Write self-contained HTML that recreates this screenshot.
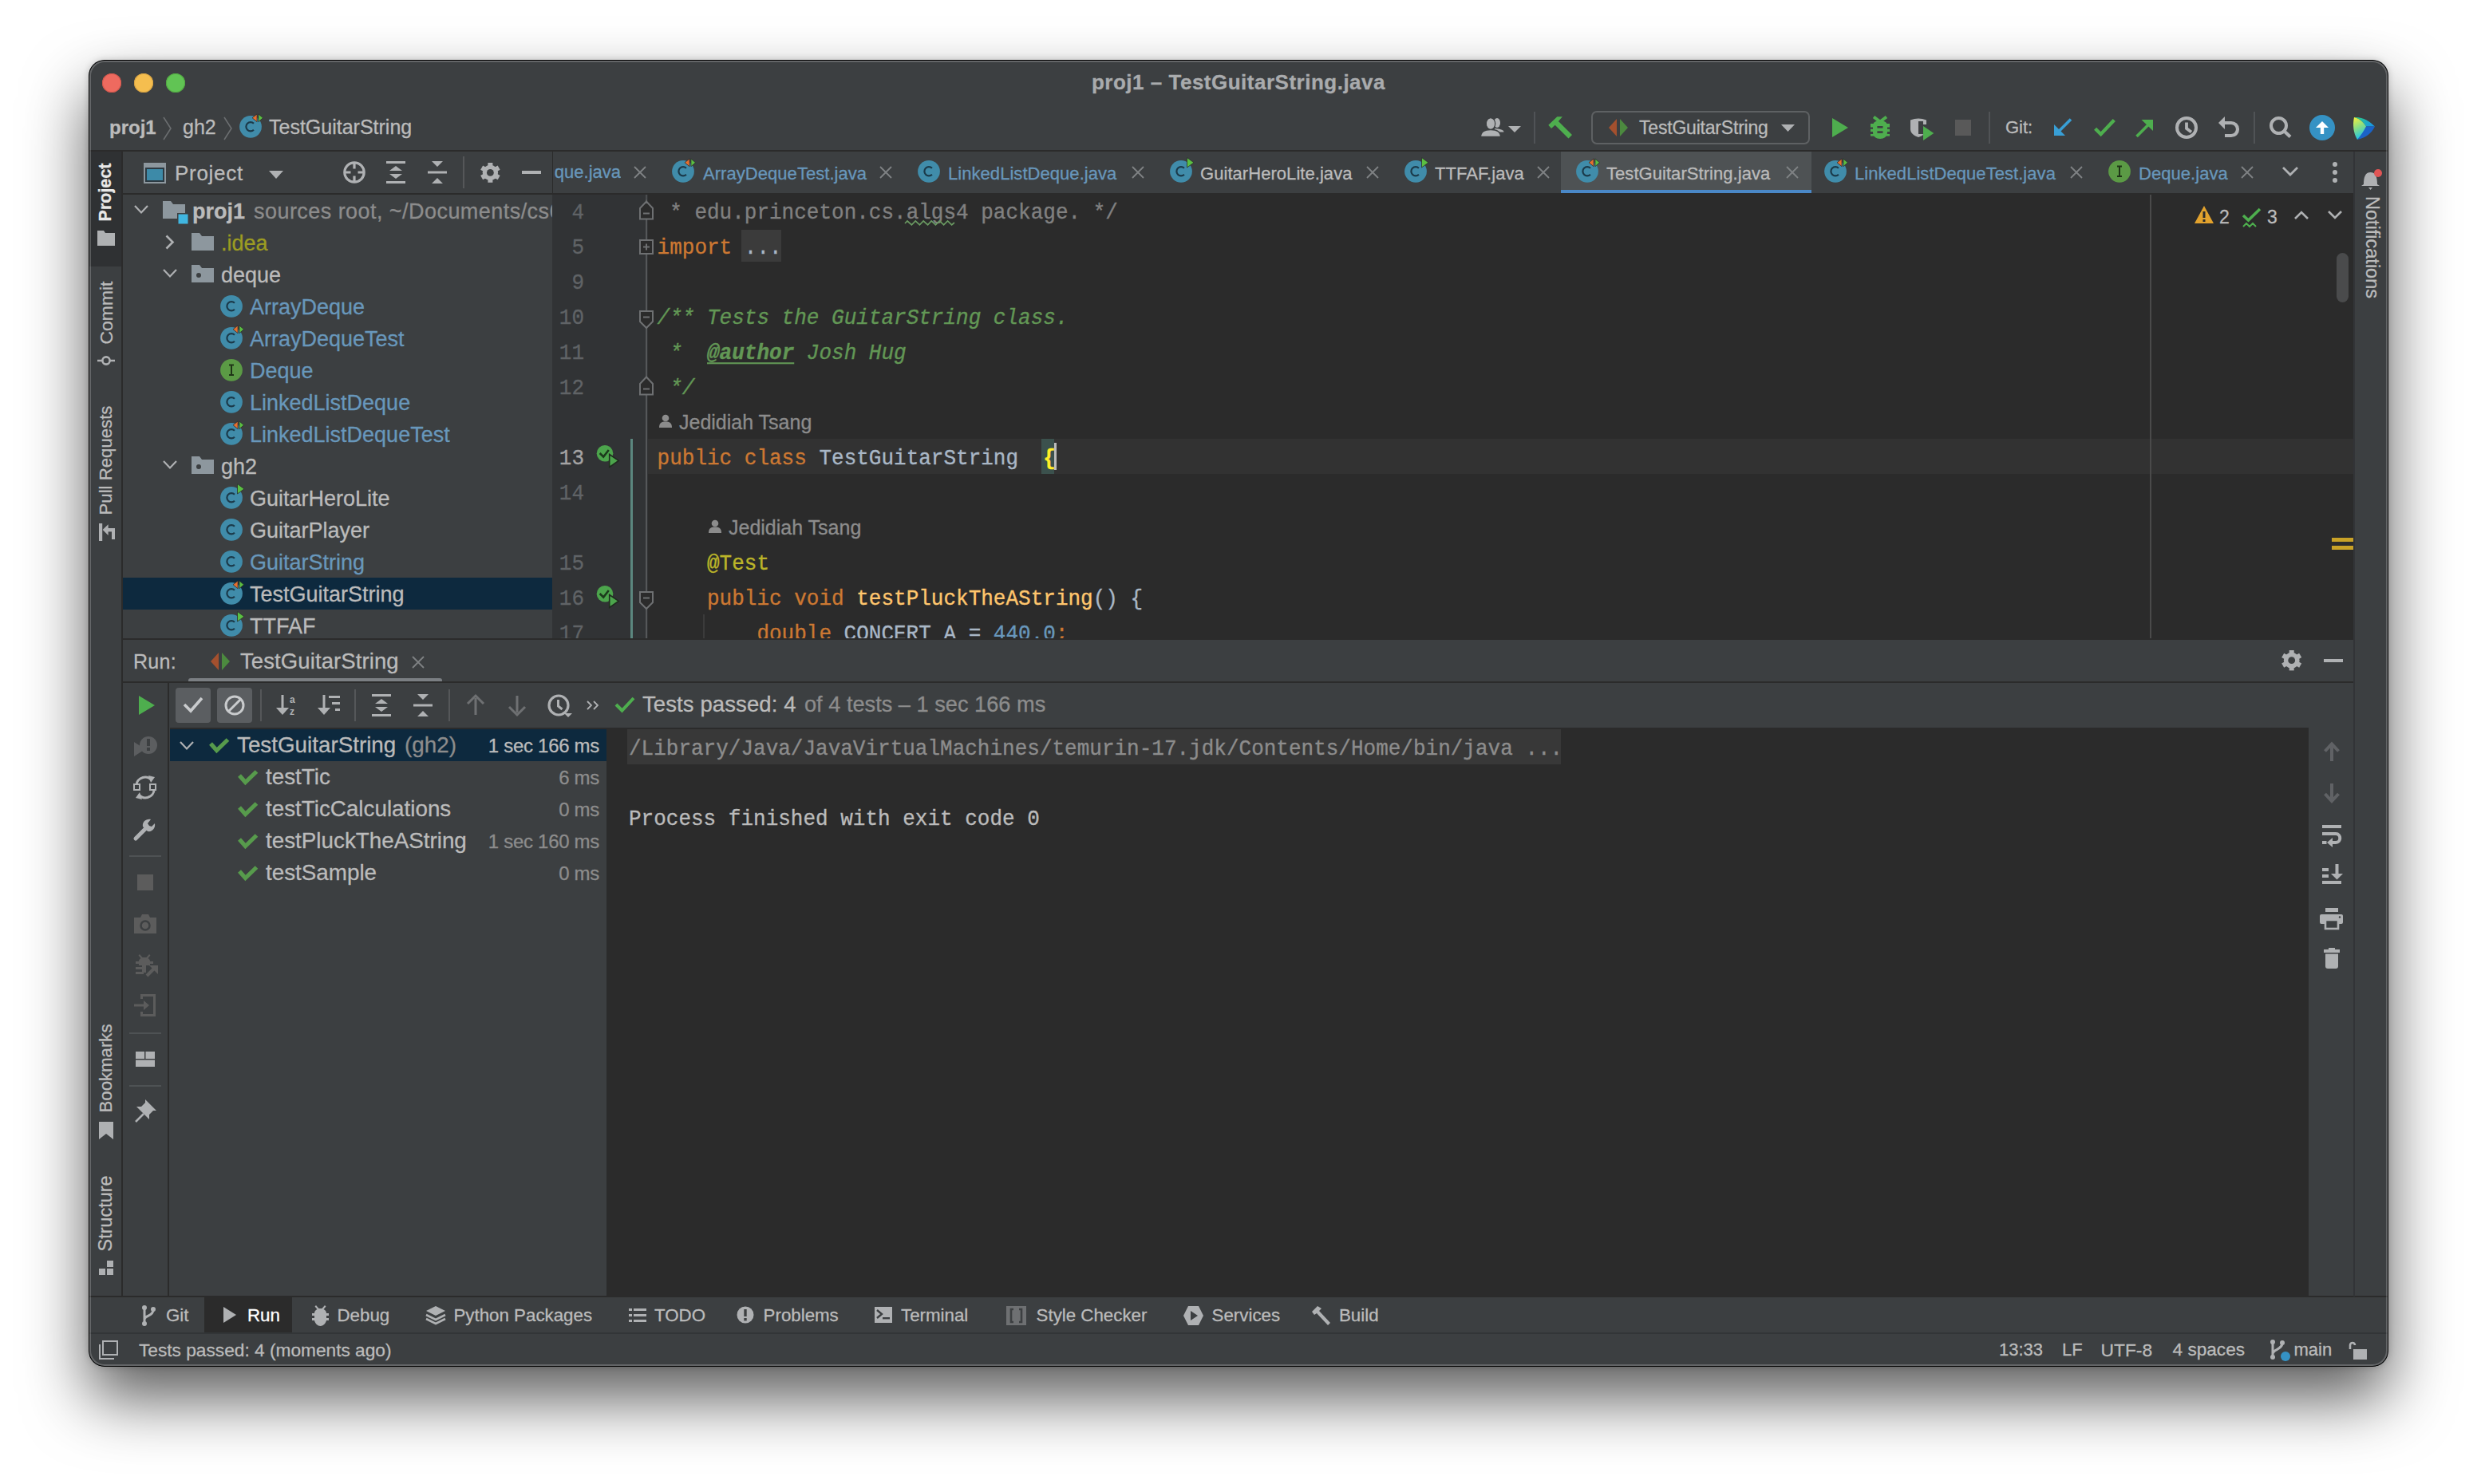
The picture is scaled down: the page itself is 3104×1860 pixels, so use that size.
<!DOCTYPE html><html><head><meta charset="utf-8"><style>html,body{margin:0;padding:0;background:#fff;width:3104px;height:1860px;overflow:hidden;position:relative}div{-webkit-text-stroke:0.3px currentColor}</style></head><body>
<div style="position:absolute;left:111px;top:75px;width:2882px;height:1638px;border-radius:20px;box-shadow:0 40px 80px 0 rgba(0,0,0,0.64), 0 0 8px rgba(0,0,0,0.18);"></div>
<div style="position:absolute;left:111px;top:75px;width:2882px;height:1638px;border-radius:20px;overflow:hidden;background:#3c3f41;">
<div style="position:absolute;left:-111px;top:-75px;width:3104px;height:1860px;">
<div style="position:absolute;left:128px;top:92px;width:24px;height:24px;border-radius:50%;background:#ee6a5f;box-shadow:inset 0 0 0 1px #d2574d"></div>
<div style="position:absolute;left:168px;top:92px;width:24px;height:24px;border-radius:50%;background:#f5be4f;box-shadow:inset 0 0 0 1px #d6a243"></div>
<div style="position:absolute;left:208px;top:92px;width:24px;height:24px;border-radius:50%;background:#61c454;box-shadow:inset 0 0 0 1px #52a842"></div>
<div style="position:absolute;left:1552px;transform:translateX(-50%);top:90.00px;font-family:'Liberation Sans', sans-serif;font-size:26px;line-height:26px;color:#a9abad;font-weight:bold;font-style:normal;letter-spacing:0.5px;white-space:pre;">proj1 – TestGuitarString.java</div>
<div style="position:absolute;left:111px;top:188px;width:2881px;height:2px;background:#2b2b2b;"></div>
<div style="position:absolute;left:137px;top:147.70px;font-family:'Liberation Sans', sans-serif;font-size:24px;line-height:24px;color:#bbbbbb;font-weight:bold;font-style:normal;letter-spacing:0px;white-space:pre;">proj1</div>
<svg style="position:absolute;left:204px;top:146px;overflow:visible;" width="12" height="30" viewBox="0 0 12 30"><path d="M1 1 L10 15 L1 29" stroke="#6b6e70" stroke-width="1.6" fill="none"/></svg>
<svg style="position:absolute;left:280px;top:146px;overflow:visible;" width="12" height="30" viewBox="0 0 12 30"><path d="M1 1 L10 15 L1 29" stroke="#6b6e70" stroke-width="1.6" fill="none"/></svg>
<div style="position:absolute;left:229px;top:146.85px;font-family:'Liberation Sans', sans-serif;font-size:25px;line-height:25px;color:#bbbbbb;font-weight:normal;font-style:normal;letter-spacing:0px;white-space:pre;">gh2</div>
<svg style="position:absolute;left:298px;top:144px;overflow:visible;" width="32" height="32" viewBox="0 0 32 32"><circle cx="16" cy="14.8" r="13.9" fill="#408caa"/><path d="M19.96 10.84 A5.6 5.6 0 1 0 19.96 18.76" stroke="#1b3a4a" stroke-width="2.2" fill="none"/><path d="M18.1 3.8 L24.1 -1.1 L24.1 8.7 Z" fill="#e8702f" stroke="#2b2d2f" stroke-width="0.8"/><path d="M25.9 -1.1 L31.5 3.8 L25.9 8.7 Z" fill="#5bbf42" stroke="#2b2d2f" stroke-width="0.8"/></svg>
<div style="position:absolute;left:337px;top:146.85px;font-family:'Liberation Sans', sans-serif;font-size:25px;line-height:25px;color:#bbbbbb;font-weight:normal;font-style:normal;letter-spacing:0px;white-space:pre;">TestGuitarString</div>
<svg style="position:absolute;left:1856px;top:148px;overflow:visible;" width="30" height="24" viewBox="0 0 30 24"><ellipse cx="20" cy="6" rx="4" ry="6" fill="#afb1b3"/><path d="M17 13 C24 13.5 28.5 15 28.5 17.5 L17 17.5 Z" fill="#afb1b3"/><ellipse cx="12" cy="7" rx="5.6" ry="7.2" fill="#afb1b3" stroke="#3c3f41" stroke-width="1.4"/><path d="M-0.5 23.5 C-0.5 16.5 5 14.5 12 14.5 C19 14.5 24.5 16.5 24.5 23.5 Z" fill="#afb1b3" stroke="#3c3f41" stroke-width="1.4"/><ellipse cx="12" cy="7" rx="4.9" ry="6.5" fill="#afb1b3"/></svg>
<svg style="position:absolute;left:1890px;top:158px;overflow:visible;" width="16" height="8" viewBox="0 0 16 8"><path d="M0 0 H16 L8 8 Z" fill="#afb1b3"/></svg>
<div style="position:absolute;left:1922px;top:140px;width:2px;height:40px;background:#505356;"></div>
<svg style="position:absolute;left:1940px;top:146px;overflow:visible;" width="30" height="28" viewBox="0 0 30 28"><path d="M0.3 10.8 L11.3 0.2 L17.9 0.2 L12.9 6.1 L30 23.1 L25.5 27.6 L8.7 10.8 L4 15 Z" fill="#4eae4e"/></svg>
<div style="position:absolute;left:1994px;top:139px;width:274px;height:42px;box-sizing:border-box;border:2px solid #5e6163;border-radius:7px"></div>
<svg style="position:absolute;left:2016px;top:148px;overflow:visible;" width="24" height="24" viewBox="0 0 24 24"><path d="M10 1 L10 23 L0 12 Z" fill="#a4502e"/><path d="M14 1 L24 12 L14 23 Z" fill="#4c8a3f"/></svg>
<div style="position:absolute;left:2054px;top:148.54px;font-family:'Liberation Sans', sans-serif;font-size:23px;line-height:23px;color:#bbbbbb;font-weight:normal;font-style:normal;letter-spacing:-0.2px;white-space:pre;">TestGuitarString</div>
<svg style="position:absolute;left:2232px;top:156px;overflow:visible;" width="17" height="9" viewBox="0 0 17 9"><path d="M0 0 H17 L8.5 9 Z" fill="#afb1b3"/></svg>
<svg style="position:absolute;left:2296px;top:148px;overflow:visible;" width="20" height="24" viewBox="0 0 20 24"><path d="M0 0 L20 12 L0 24 Z" fill="#4eae4e"/></svg>
<svg style="position:absolute;left:2344px;top:146px;overflow:visible;" width="24" height="28" viewBox="0 0 24 28"><path d="M4 0.5 L12 6.5 L20 0.5" stroke="#4eae4e" stroke-width="4" fill="none"/><path d="M3 12 C3 7 7 5 12 5 C17 5 21 7 21 12 L21 20 C21 25 17 28 12 28 C7 28 3 25 3 20 Z" fill="#4eae4e"/><rect x="0" y="9" width="24" height="4.5" fill="#4eae4e"/><rect x="0" y="15.8" width="24" height="3.2" fill="#4eae4e"/><rect x="0" y="22" width="24" height="2.6" fill="#4eae4e"/><rect x="8.4" y="12" width="7.1" height="2.6" fill="#3c3f41"/><rect x="8.4" y="18.3" width="7.1" height="2.6" fill="#3c3f41"/></svg>
<svg style="position:absolute;left:2394px;top:148px;overflow:visible;" width="30" height="28" viewBox="0 0 30 28"><path d="M0 2.5 Q10 -1.5 20 2.5 L20 14 C20 19 15 22.5 10 24 C5 22.5 0 19 0 14 Z" fill="#afb1b3"/><rect x="10" y="4" width="6" height="16" fill="#3c3f41"/><rect x="15.8" y="8" width="8" height="20" fill="#3c3f41"/><path d="M16 10 L29.3 19 L16 28 Z" fill="#4eae4e"/></svg>
<div style="position:absolute;left:2450px;top:150px;width:20px;height:20px;background:#595959;"></div>
<div style="position:absolute;left:2492px;top:140px;width:2px;height:40px;background:#505356;"></div>
<div style="position:absolute;left:2513px;top:149.39px;font-family:'Liberation Sans', sans-serif;font-size:22px;line-height:22px;color:#bbbbbb;font-weight:normal;font-style:normal;letter-spacing:0px;white-space:pre;">Git:</div>
<svg style="position:absolute;left:2574px;top:148px;overflow:visible;" width="23" height="22" viewBox="0 0 23 22"><path d="M21 1.5 L6 16.5" stroke="#389fd6" stroke-width="3.6"/><path d="M0 8 L0 22 L14 22 Z" fill="#389fd6"/></svg>
<svg style="position:absolute;left:2624px;top:148px;overflow:visible;" width="27" height="22" viewBox="0 0 27 22"><path d="M1.6 13.2 L8.6 20.2 L25.3 2.5" stroke="#4eae4e" stroke-width="4.4" fill="none"/></svg>
<svg style="position:absolute;left:2676px;top:148px;overflow:visible;" width="23" height="26" viewBox="0 0 23 26"><path d="M1.5 23 L16 8.5" stroke="#4eae4e" stroke-width="3.6"/><path d="M7.5 2 L22 2 L22 16 Z" fill="#4eae4e"/></svg>
<svg style="position:absolute;left:2726px;top:146px;overflow:visible;" width="28" height="28" viewBox="0 0 28 28"><circle cx="14" cy="14" r="12" stroke="#afb1b3" stroke-width="4" fill="none"/><path d="M14 7.5 L14 15 L20 19.5" stroke="#afb1b3" stroke-width="3.8" fill="none"/></svg>
<svg style="position:absolute;left:2780px;top:146px;overflow:visible;" width="26" height="28" viewBox="0 0 26 28"><path d="M7 8 H16 A8 8 0 0 1 16 24 H8" stroke="#afb1b3" stroke-width="4.2" fill="none"/><path d="M0 8 L8 0 L8 16 Z" fill="#afb1b3"/></svg>
<div style="position:absolute;left:2824px;top:140px;width:2px;height:40px;background:#505356;"></div>
<svg style="position:absolute;left:2844px;top:146px;overflow:visible;" width="28" height="28" viewBox="0 0 28 28"><circle cx="11.5" cy="11.5" r="9.5" stroke="#afb1b3" stroke-width="4" fill="none"/><path d="M18 18 L26 25.5" stroke="#afb1b3" stroke-width="4.2"/></svg>
<svg style="position:absolute;left:2894px;top:144px;overflow:visible;" width="32" height="32" viewBox="0 0 32 32"><circle cx="16" cy="16" r="16" fill="#3592c4"/><path d="M16 8 L24 16 L18.2 16 L18.2 24 L13.8 24 L13.8 16 L8 16 Z" fill="#fff"/></svg>
<svg style="position:absolute;left:2948px;top:146px;overflow:visible;" width="30" height="30" viewBox="0 0 30 30"><defs><linearGradient id="jg" x1="0" y1="0" x2="0.3" y2="1"><stop offset="0" stop-color="#f8f03a"/><stop offset="0.55" stop-color="#7fdc8a"/><stop offset="1" stop-color="#20c4e8"/></linearGradient><linearGradient id="jg2" x1="0" y1="0" x2="1" y2="0.5"><stop offset="0" stop-color="#2ad07a"/><stop offset="1" stop-color="#1a9be0"/></linearGradient></defs><path d="M2 1 C12 0 22 6 28 12.5 L17 12.5 C13 6 8 2.5 2 1 Z" fill="url(#jg2)"/><path d="M17 12.5 L28 12.5 C24 21 16 27 6 29 Z" fill="#1b63c8"/><path d="M2 1 C8 2.5 13 6 17 12.5 C14 19 10 24 6 29 C1 21 0 10 2 1 Z" fill="url(#jg)"/></svg>
<div style="position:absolute;left:692px;top:190px;width:2259px;height:52px;background:#3c3f41;"></div>
<div style="position:absolute;left:1956px;top:190px;width:314px;height:52px;background:#4e5254;"></div>
<div style="position:absolute;left:1956px;top:238px;width:314px;height:5px;background:#4a88c7;"></div>
<div style="position:absolute;left:694px;top:190px;width:84px;height:52px;overflow:hidden">
<div style="position:absolute;right:0;top:15.39px;font-family:'Liberation Sans', sans-serif;font-size:22px;line-height:22px;color:#6897bb;white-space:pre">que.java</div></div>
<svg style="position:absolute;left:794px;top:208px;overflow:visible;" width="16" height="16" viewBox="0 0 16 16"><path d="M1 1 L15 15 M15 1 L1 15" stroke="#7f8284" stroke-width="1.8"/></svg>
<svg style="position:absolute;left:840px;top:200px;overflow:visible;" width="32" height="32" viewBox="0 0 32 32"><circle cx="16" cy="14.8" r="13.9" fill="#408caa"/><path d="M19.96 10.84 A5.6 5.6 0 1 0 19.96 18.76" stroke="#1b3a4a" stroke-width="2.2" fill="none"/><path d="M18.1 3.8 L24.1 -1.1 L24.1 8.7 Z" fill="#e8702f" stroke="#2b2d2f" stroke-width="0.8"/><path d="M25.9 -1.1 L31.5 3.8 L25.9 8.7 Z" fill="#5bbf42" stroke="#2b2d2f" stroke-width="0.8"/></svg>
<div style="position:absolute;left:881px;top:206.69px;font-family:'Liberation Sans', sans-serif;font-size:22px;line-height:22px;color:#6897bb;font-weight:normal;font-style:normal;letter-spacing:0.05px;white-space:pre;">ArrayDequeTest.java</div>
<svg style="position:absolute;left:1102px;top:208px;overflow:visible;" width="16" height="16" viewBox="0 0 16 16"><path d="M1 1 L15 15 M15 1 L1 15" stroke="#7f8284" stroke-width="1.8"/></svg>
<svg style="position:absolute;left:1148px;top:200px;overflow:visible;" width="32" height="32" viewBox="0 0 32 32"><circle cx="16" cy="14.8" r="13.9" fill="#408caa"/><path d="M19.96 10.84 A5.6 5.6 0 1 0 19.96 18.76" stroke="#1b3a4a" stroke-width="2.2" fill="none"/></svg>
<div style="position:absolute;left:1188px;top:206.69px;font-family:'Liberation Sans', sans-serif;font-size:22px;line-height:22px;color:#6897bb;font-weight:normal;font-style:normal;letter-spacing:0.05px;white-space:pre;">LinkedListDeque.java</div>
<svg style="position:absolute;left:1418px;top:208px;overflow:visible;" width="16" height="16" viewBox="0 0 16 16"><path d="M1 1 L15 15 M15 1 L1 15" stroke="#7f8284" stroke-width="1.8"/></svg>
<svg style="position:absolute;left:1464px;top:200px;overflow:visible;" width="32" height="32" viewBox="0 0 32 32"><circle cx="16" cy="14.8" r="13.9" fill="#408caa"/><path d="M19.96 10.84 A5.6 5.6 0 1 0 19.96 18.76" stroke="#1b3a4a" stroke-width="2.2" fill="none"/><path d="M23.5 -2.5 L32 3.8 L23.5 10 Z" fill="#5bbf42" stroke="#2b2d2f" stroke-width="0.8"/></svg>
<div style="position:absolute;left:1504px;top:206.69px;font-family:'Liberation Sans', sans-serif;font-size:22px;line-height:22px;color:#bbbbbb;font-weight:normal;font-style:normal;letter-spacing:0.05px;white-space:pre;">GuitarHeroLite.java</div>
<svg style="position:absolute;left:1712px;top:208px;overflow:visible;" width="16" height="16" viewBox="0 0 16 16"><path d="M1 1 L15 15 M15 1 L1 15" stroke="#7f8284" stroke-width="1.8"/></svg>
<svg style="position:absolute;left:1758px;top:200px;overflow:visible;" width="32" height="32" viewBox="0 0 32 32"><circle cx="16" cy="14.8" r="13.9" fill="#408caa"/><path d="M19.96 10.84 A5.6 5.6 0 1 0 19.96 18.76" stroke="#1b3a4a" stroke-width="2.2" fill="none"/><path d="M23.5 -2.5 L32 3.8 L23.5 10 Z" fill="#5bbf42" stroke="#2b2d2f" stroke-width="0.8"/></svg>
<div style="position:absolute;left:1798px;top:206.69px;font-family:'Liberation Sans', sans-serif;font-size:22px;line-height:22px;color:#bbbbbb;font-weight:normal;font-style:normal;letter-spacing:0.05px;white-space:pre;">TTFAF.java</div>
<svg style="position:absolute;left:1926px;top:208px;overflow:visible;" width="16" height="16" viewBox="0 0 16 16"><path d="M1 1 L15 15 M15 1 L1 15" stroke="#7f8284" stroke-width="1.8"/></svg>
<svg style="position:absolute;left:1973px;top:200px;overflow:visible;" width="32" height="32" viewBox="0 0 32 32"><circle cx="16" cy="14.8" r="13.9" fill="#408caa"/><path d="M19.96 10.84 A5.6 5.6 0 1 0 19.96 18.76" stroke="#1b3a4a" stroke-width="2.2" fill="none"/><path d="M18.1 3.8 L24.1 -1.1 L24.1 8.7 Z" fill="#e8702f" stroke="#2b2d2f" stroke-width="0.8"/><path d="M25.9 -1.1 L31.5 3.8 L25.9 8.7 Z" fill="#5bbf42" stroke="#2b2d2f" stroke-width="0.8"/></svg>
<div style="position:absolute;left:2013px;top:206.69px;font-family:'Liberation Sans', sans-serif;font-size:22px;line-height:22px;color:#bbbbbb;font-weight:normal;font-style:normal;letter-spacing:0.05px;white-space:pre;">TestGuitarString.java</div>
<svg style="position:absolute;left:2238px;top:208px;overflow:visible;" width="16" height="16" viewBox="0 0 16 16"><path d="M1 1 L15 15 M15 1 L1 15" stroke="#7f8284" stroke-width="1.8"/></svg>
<svg style="position:absolute;left:2284px;top:200px;overflow:visible;" width="32" height="32" viewBox="0 0 32 32"><circle cx="16" cy="14.8" r="13.9" fill="#408caa"/><path d="M19.96 10.84 A5.6 5.6 0 1 0 19.96 18.76" stroke="#1b3a4a" stroke-width="2.2" fill="none"/><path d="M18.1 3.8 L24.1 -1.1 L24.1 8.7 Z" fill="#e8702f" stroke="#2b2d2f" stroke-width="0.8"/><path d="M25.9 -1.1 L31.5 3.8 L25.9 8.7 Z" fill="#5bbf42" stroke="#2b2d2f" stroke-width="0.8"/></svg>
<div style="position:absolute;left:2324px;top:206.69px;font-family:'Liberation Sans', sans-serif;font-size:22px;line-height:22px;color:#6897bb;font-weight:normal;font-style:normal;letter-spacing:0.05px;white-space:pre;">LinkedListDequeTest.java</div>
<svg style="position:absolute;left:2594px;top:208px;overflow:visible;" width="16" height="16" viewBox="0 0 16 16"><path d="M1 1 L15 15 M15 1 L1 15" stroke="#7f8284" stroke-width="1.8"/></svg>
<svg style="position:absolute;left:2640px;top:200px;overflow:visible;" width="32" height="32" viewBox="0 0 32 32"><circle cx="16" cy="14.8" r="13.9" fill="#5b9a45"/><path d="M13 8.5 H19 M16 8.5 V21 M13 21 H19" stroke="#1f3517" stroke-width="2" fill="none"/></svg>
<div style="position:absolute;left:2680px;top:206.69px;font-family:'Liberation Sans', sans-serif;font-size:22px;line-height:22px;color:#6897bb;font-weight:normal;font-style:normal;letter-spacing:0.05px;white-space:pre;">Deque.java</div>
<svg style="position:absolute;left:2808px;top:208px;overflow:visible;" width="16" height="16" viewBox="0 0 16 16"><path d="M1 1 L15 15 M15 1 L1 15" stroke="#7f8284" stroke-width="1.8"/></svg>
<svg style="position:absolute;left:2860px;top:209px;overflow:visible;" width="20" height="12" viewBox="0 0 20 12"><path d="M1 1 L10 10 L19 1" stroke="#afb1b3" stroke-width="2.8" fill="none"/></svg>
<div style="position:absolute;left:2923px;top:203px;width:6px;height:6px;border-radius:50%;background:#afb1b3"></div>
<div style="position:absolute;left:2923px;top:213px;width:6px;height:6px;border-radius:50%;background:#afb1b3"></div>
<div style="position:absolute;left:2923px;top:223px;width:6px;height:6px;border-radius:50%;background:#afb1b3"></div>
<div style="position:absolute;left:692px;top:242px;width:2259px;height:2px;background:#2b2b2b;"></div>
<div style="position:absolute;left:690px;top:190px;width:3px;height:54px;background:#2b2b2b;"></div>
<div style="position:absolute;left:112px;top:190px;width:40px;height:1435px;background:#3c3f41;"></div>
<div style="position:absolute;left:112px;top:190px;width:40px;height:144px;background:#2f3133;"></div>
<div style="position:absolute;left:152px;top:190px;width:2px;height:1435px;background:#2b2b2b;"></div>
<div style="position:absolute;left:133px;top:240.5px;width:0;height:0;"><div style="position:absolute;left:0;top:0;transform:translate(-50%,-50%) rotate(-90deg);font-family:'Liberation Sans', sans-serif;font-size:21.5px;line-height:21.5px;color:#e8e8e8;font-weight:bold;white-space:pre;letter-spacing:0px">Project</div></div>
<svg style="position:absolute;left:122px;top:289px;overflow:visible;" width="22" height="19" viewBox="0 0 22 19"><path d="M0 0 L8 0 L10 3 L22 3 L22 19 L0 19 Z" fill="#afb1b3"/></svg>
<div style="position:absolute;left:133px;top:391.5px;width:0;height:0;"><div style="position:absolute;left:0;top:0;transform:translate(-50%,-50%) rotate(-90deg);font-family:'Liberation Sans', sans-serif;font-size:22.9px;line-height:22.9px;color:#bbbbbb;font-weight:normal;white-space:pre;letter-spacing:0px">Commit</div></div>
<svg style="position:absolute;left:122px;top:444px;overflow:visible;" width="22" height="16" viewBox="0 0 22 16"><circle cx="11" cy="8" r="4.6" stroke="#afb1b3" stroke-width="2.6" fill="none"/><path d="M0 8 H6 M16 8 H22" stroke="#afb1b3" stroke-width="2.6"/></svg>
<div style="position:absolute;left:133px;top:576.5px;width:0;height:0;"><div style="position:absolute;left:0;top:0;transform:translate(-50%,-50%) rotate(-90deg);font-family:'Liberation Sans', sans-serif;font-size:22.2px;line-height:22.2px;color:#bbbbbb;font-weight:normal;white-space:pre;letter-spacing:0px">Pull Requests</div></div>
<svg style="position:absolute;left:124px;top:656px;overflow:visible;" width="22" height="22" viewBox="0 0 22 22"><rect x="0" y="0" width="4.2" height="22" fill="#afb1b3"/><path d="M4.6 8 L11.6 1.3 L11.6 15 Z" fill="#afb1b3"/><rect x="11" y="6" width="9" height="4.4" fill="#afb1b3"/><rect x="16" y="6" width="4" height="14" fill="#afb1b3"/></svg>
<div style="position:absolute;left:133px;top:1338.5px;width:0;height:0;"><div style="position:absolute;left:0;top:0;transform:translate(-50%,-50%) rotate(-90deg);font-family:'Liberation Sans', sans-serif;font-size:22.2px;line-height:22.2px;color:#bbbbbb;font-weight:normal;white-space:pre;letter-spacing:0px">Bookmarks</div></div>
<svg style="position:absolute;left:124px;top:1406px;overflow:visible;" width="18" height="22" viewBox="0 0 18 22"><path d="M0 0 H18 V22 L9 15 L0 22 Z" fill="#afb1b3"/></svg>
<div style="position:absolute;left:133px;top:1520.5px;width:0;height:0;"><div style="position:absolute;left:0;top:0;transform:translate(-50%,-50%) rotate(-90deg);font-family:'Liberation Sans', sans-serif;font-size:23.4px;line-height:23.4px;color:#bbbbbb;font-weight:normal;white-space:pre;letter-spacing:0px">Structure</div></div>
<svg style="position:absolute;left:124px;top:1580px;overflow:visible;" width="18" height="18" viewBox="0 0 18 18"><rect x="10" y="0" width="8" height="8" fill="#afb1b3"/><rect x="0" y="10" width="8" height="8" fill="#afb1b3"/><rect x="10" y="10" width="8" height="8" fill="#afb1b3"/></svg>
<div style="position:absolute;left:154px;top:190px;width:538px;height:610px;background:#3c3f41;"></div>
<svg style="position:absolute;left:180px;top:204px;overflow:visible;" width="28" height="26" viewBox="0 0 28 26"><rect x="0" y="0" width="28" height="26" fill="#8d979e"/><rect x="2" y="6" width="24" height="18" fill="#2d3a42"/><rect x="4" y="8" width="20" height="14" fill="#3d8aa8"/></svg>
<div style="position:absolute;left:219px;top:204.00px;font-family:'Liberation Sans', sans-serif;font-size:26px;line-height:26px;color:#bbbbbb;font-weight:normal;font-style:normal;letter-spacing:0.7px;white-space:pre;">Project</div>
<svg style="position:absolute;left:337px;top:214px;overflow:visible;" width="18" height="10" viewBox="0 0 18 10"><path d="M0 0 H18 L9 10 Z" fill="#afb1b3"/></svg>
<svg style="position:absolute;left:430px;top:202px;overflow:visible;" width="28" height="28" viewBox="0 0 28 28"><circle cx="14" cy="14" r="12.2" stroke="#afb1b3" stroke-width="3.2" fill="none"/><path d="M14 2 V9.5 M14 18.5 V26 M2 14 H9.5 M18.5 14 H26" stroke="#afb1b3" stroke-width="3.2"/></svg>
<svg style="position:absolute;left:484px;top:202px;overflow:visible;" width="24" height="28" viewBox="0 0 24 28"><rect x="0" y="0" width="24" height="3" fill="#afb1b3"/><rect x="0" y="25" width="24" height="3" fill="#afb1b3"/><path d="M4 12 L12 6 L20 12 Z M4 16 L20 16 L12 22 Z" fill="#afb1b3"/></svg>
<svg style="position:absolute;left:536px;top:202px;overflow:visible;" width="24" height="28" viewBox="0 0 24 28"><rect x="0" y="12.5" width="24" height="3" fill="#afb1b3"/><path d="M5 0 H19 L12 7 Z M12 21 L19 28 H5 Z" fill="#afb1b3"/></svg>
<div style="position:absolute;left:580px;top:196px;width:2px;height:40px;background:#555759;"></div>
<svg style="position:absolute;left:601.6px;top:203.6px;overflow:visible;" width="24.8" height="24.8" viewBox="0 0 24.8 24.8"><rect x="9.4" y="0" width="6" height="6" fill="#afb1b3" transform="rotate(0 12.4 12.4)"/><rect x="9.4" y="0" width="6" height="6" fill="#afb1b3" transform="rotate(60 12.4 12.4)"/><rect x="9.4" y="0" width="6" height="6" fill="#afb1b3" transform="rotate(120 12.4 12.4)"/><rect x="9.4" y="0" width="6" height="6" fill="#afb1b3" transform="rotate(180 12.4 12.4)"/><rect x="9.4" y="0" width="6" height="6" fill="#afb1b3" transform="rotate(240 12.4 12.4)"/><rect x="9.4" y="0" width="6" height="6" fill="#afb1b3" transform="rotate(300 12.4 12.4)"/><circle cx="12.4" cy="12.4" r="9.672" fill="#afb1b3"/><circle cx="12.4" cy="12.4" r="4.4" fill="#3c3f41"/></svg>
<div style="position:absolute;left:654px;top:214px;width:24px;height:4px;background:#afb1b3;"></div>
<div style="position:absolute;left:154px;top:242px;width:538px;height:2px;background:#2b2b2b;"></div>
<div style="position:absolute;left:154px;top:724px;width:538px;height:40px;background:#0d293e;"></div>
<svg style="position:absolute;left:168px;top:257px;overflow:visible;" width="18" height="11" viewBox="0 0 18 11"><path d="M1 1 L9 9.5 L17 1" stroke="#afb1b3" stroke-width="2.2" fill="none"/></svg>
<svg style="position:absolute;left:204px;top:252px;overflow:visible;" width="32" height="28" viewBox="0 0 32 28"><path d="M0 0 H10 L13 4 H28 V22 H0 Z" fill="#8d979e"/><rect x="18" y="15" width="12" height="12" fill="#3c3f41"/><rect x="19.5" y="16.5" width="12" height="12" fill="#40b6e0"/></svg>
<div style="position:absolute;left:241px;top:251.66px;font-family:'Liberation Sans', sans-serif;font-size:27px;line-height:27px;color:#bbbbbb;font-weight:bold;font-style:normal;letter-spacing:0px;white-space:pre;">proj1</div>
<div style="position:absolute;left:318px;top:251.66px;width:374px;overflow:hidden;font-family:'Liberation Sans', sans-serif;font-size:27px;line-height:27px;color:#8c8c8c;letter-spacing:0.45px;white-space:pre">sources root, ~/Documents/cs61b/sp23-s1034</div>
<svg style="position:absolute;left:206.5px;top:294px;overflow:visible;" width="12" height="19" viewBox="0 0 12 19"><path d="M1.5 1.5 L9.5 9.5 L1.5 17.5" stroke="#afb1b3" stroke-width="2.6" fill="none"/></svg>
<svg style="position:absolute;left:240px;top:292px;overflow:visible;" width="32" height="28" viewBox="0 0 32 28"><path d="M0 0 H10 L13 4 H28 V22 H0 Z" fill="#8d979e"/></svg>
<div style="position:absolute;left:277px;top:291.66px;font-family:'Liberation Sans', sans-serif;font-size:27px;line-height:27px;color:#9c9c22;font-weight:normal;font-style:normal;letter-spacing:0px;white-space:pre;">.idea</div>
<svg style="position:absolute;left:204px;top:337px;overflow:visible;" width="18" height="11" viewBox="0 0 18 11"><path d="M1 1 L9 9.5 L17 1" stroke="#afb1b3" stroke-width="2.2" fill="none"/></svg>
<svg style="position:absolute;left:240px;top:332px;overflow:visible;" width="32" height="28" viewBox="0 0 32 28"><path d="M0 0 H10 L13 4 H28 V22 H0 Z" fill="#8d979e"/><circle cx="9" cy="13" r="3" fill="#3c3f41"/></svg>
<div style="position:absolute;left:277px;top:331.66px;font-family:'Liberation Sans', sans-serif;font-size:27px;line-height:27px;color:#bbbbbb;font-weight:normal;font-style:normal;letter-spacing:0px;white-space:pre;">deque</div>
<svg style="position:absolute;left:274px;top:369px;overflow:visible;" width="32" height="32" viewBox="0 0 32 32"><circle cx="16" cy="14.8" r="13.9" fill="#408caa"/><path d="M19.96 10.84 A5.6 5.6 0 1 0 19.96 18.76" stroke="#1b3a4a" stroke-width="2.2" fill="none"/></svg>
<div style="position:absolute;left:313px;top:371.66px;font-family:'Liberation Sans', sans-serif;font-size:27px;line-height:27px;color:#6897bb;font-weight:normal;font-style:normal;letter-spacing:0px;white-space:pre;">ArrayDeque</div>
<svg style="position:absolute;left:274px;top:409px;overflow:visible;" width="32" height="32" viewBox="0 0 32 32"><circle cx="16" cy="14.8" r="13.9" fill="#408caa"/><path d="M19.96 10.84 A5.6 5.6 0 1 0 19.96 18.76" stroke="#1b3a4a" stroke-width="2.2" fill="none"/><path d="M18.1 3.8 L24.1 -1.1 L24.1 8.7 Z" fill="#e8702f" stroke="#2b2d2f" stroke-width="0.8"/><path d="M25.9 -1.1 L31.5 3.8 L25.9 8.7 Z" fill="#5bbf42" stroke="#2b2d2f" stroke-width="0.8"/></svg>
<div style="position:absolute;left:313px;top:411.66px;font-family:'Liberation Sans', sans-serif;font-size:27px;line-height:27px;color:#6897bb;font-weight:normal;font-style:normal;letter-spacing:0px;white-space:pre;">ArrayDequeTest</div>
<svg style="position:absolute;left:274px;top:449px;overflow:visible;" width="32" height="32" viewBox="0 0 32 32"><circle cx="16" cy="14.8" r="13.9" fill="#5b9a45"/><path d="M13 8.5 H19 M16 8.5 V21 M13 21 H19" stroke="#1f3517" stroke-width="2" fill="none"/></svg>
<div style="position:absolute;left:313px;top:451.66px;font-family:'Liberation Sans', sans-serif;font-size:27px;line-height:27px;color:#6897bb;font-weight:normal;font-style:normal;letter-spacing:0px;white-space:pre;">Deque</div>
<svg style="position:absolute;left:274px;top:489px;overflow:visible;" width="32" height="32" viewBox="0 0 32 32"><circle cx="16" cy="14.8" r="13.9" fill="#408caa"/><path d="M19.96 10.84 A5.6 5.6 0 1 0 19.96 18.76" stroke="#1b3a4a" stroke-width="2.2" fill="none"/></svg>
<div style="position:absolute;left:313px;top:491.66px;font-family:'Liberation Sans', sans-serif;font-size:27px;line-height:27px;color:#6897bb;font-weight:normal;font-style:normal;letter-spacing:0px;white-space:pre;">LinkedListDeque</div>
<svg style="position:absolute;left:274px;top:529px;overflow:visible;" width="32" height="32" viewBox="0 0 32 32"><circle cx="16" cy="14.8" r="13.9" fill="#408caa"/><path d="M19.96 10.84 A5.6 5.6 0 1 0 19.96 18.76" stroke="#1b3a4a" stroke-width="2.2" fill="none"/><path d="M18.1 3.8 L24.1 -1.1 L24.1 8.7 Z" fill="#e8702f" stroke="#2b2d2f" stroke-width="0.8"/><path d="M25.9 -1.1 L31.5 3.8 L25.9 8.7 Z" fill="#5bbf42" stroke="#2b2d2f" stroke-width="0.8"/></svg>
<div style="position:absolute;left:313px;top:531.66px;font-family:'Liberation Sans', sans-serif;font-size:27px;line-height:27px;color:#6897bb;font-weight:normal;font-style:normal;letter-spacing:0px;white-space:pre;">LinkedListDequeTest</div>
<svg style="position:absolute;left:204px;top:577px;overflow:visible;" width="18" height="11" viewBox="0 0 18 11"><path d="M1 1 L9 9.5 L17 1" stroke="#afb1b3" stroke-width="2.2" fill="none"/></svg>
<svg style="position:absolute;left:240px;top:572px;overflow:visible;" width="32" height="28" viewBox="0 0 32 28"><path d="M0 0 H10 L13 4 H28 V22 H0 Z" fill="#8d979e"/><circle cx="9" cy="13" r="3" fill="#3c3f41"/></svg>
<div style="position:absolute;left:277px;top:571.66px;font-family:'Liberation Sans', sans-serif;font-size:27px;line-height:27px;color:#bbbbbb;font-weight:normal;font-style:normal;letter-spacing:0px;white-space:pre;">gh2</div>
<svg style="position:absolute;left:274px;top:609px;overflow:visible;" width="32" height="32" viewBox="0 0 32 32"><circle cx="16" cy="14.8" r="13.9" fill="#408caa"/><path d="M19.96 10.84 A5.6 5.6 0 1 0 19.96 18.76" stroke="#1b3a4a" stroke-width="2.2" fill="none"/><path d="M23.5 -2.5 L32 3.8 L23.5 10 Z" fill="#5bbf42" stroke="#2b2d2f" stroke-width="0.8"/></svg>
<div style="position:absolute;left:313px;top:611.66px;font-family:'Liberation Sans', sans-serif;font-size:27px;line-height:27px;color:#bbbbbb;font-weight:normal;font-style:normal;letter-spacing:0px;white-space:pre;">GuitarHeroLite</div>
<svg style="position:absolute;left:274px;top:649px;overflow:visible;" width="32" height="32" viewBox="0 0 32 32"><circle cx="16" cy="14.8" r="13.9" fill="#408caa"/><path d="M19.96 10.84 A5.6 5.6 0 1 0 19.96 18.76" stroke="#1b3a4a" stroke-width="2.2" fill="none"/></svg>
<div style="position:absolute;left:313px;top:651.66px;font-family:'Liberation Sans', sans-serif;font-size:27px;line-height:27px;color:#bbbbbb;font-weight:normal;font-style:normal;letter-spacing:0px;white-space:pre;">GuitarPlayer</div>
<svg style="position:absolute;left:274px;top:689px;overflow:visible;" width="32" height="32" viewBox="0 0 32 32"><circle cx="16" cy="14.8" r="13.9" fill="#408caa"/><path d="M19.96 10.84 A5.6 5.6 0 1 0 19.96 18.76" stroke="#1b3a4a" stroke-width="2.2" fill="none"/></svg>
<div style="position:absolute;left:313px;top:691.66px;font-family:'Liberation Sans', sans-serif;font-size:27px;line-height:27px;color:#6897bb;font-weight:normal;font-style:normal;letter-spacing:0px;white-space:pre;">GuitarString</div>
<svg style="position:absolute;left:274px;top:729px;overflow:visible;" width="32" height="32" viewBox="0 0 32 32"><circle cx="16" cy="14.8" r="13.9" fill="#408caa"/><path d="M19.96 10.84 A5.6 5.6 0 1 0 19.96 18.76" stroke="#1b3a4a" stroke-width="2.2" fill="none"/><path d="M18.1 3.8 L24.1 -1.1 L24.1 8.7 Z" fill="#e8702f" stroke="#2b2d2f" stroke-width="0.8"/><path d="M25.9 -1.1 L31.5 3.8 L25.9 8.7 Z" fill="#5bbf42" stroke="#2b2d2f" stroke-width="0.8"/></svg>
<div style="position:absolute;left:313px;top:731.66px;font-family:'Liberation Sans', sans-serif;font-size:27px;line-height:27px;color:#bbbbbb;font-weight:normal;font-style:normal;letter-spacing:0px;white-space:pre;">TestGuitarString</div>
<svg style="position:absolute;left:274px;top:769px;overflow:visible;" width="32" height="32" viewBox="0 0 32 32"><circle cx="16" cy="14.8" r="13.9" fill="#408caa"/><path d="M19.96 10.84 A5.6 5.6 0 1 0 19.96 18.76" stroke="#1b3a4a" stroke-width="2.2" fill="none"/><path d="M23.5 -2.5 L32 3.8 L23.5 10 Z" fill="#5bbf42" stroke="#2b2d2f" stroke-width="0.8"/></svg>
<div style="position:absolute;left:313px;top:771.66px;font-family:'Liberation Sans', sans-serif;font-size:27px;line-height:27px;color:#bbbbbb;font-weight:normal;font-style:normal;letter-spacing:0px;white-space:pre;">TTFAF</div>
<div style="position:absolute;left:692px;top:244px;width:2259px;height:556px;background:#2b2b2b;"></div>
<div style="position:absolute;left:692px;top:244px;width:120px;height:556px;background:#313335;"></div>
<div style="position:absolute;left:812px;top:550px;width:2139px;height:44px;background:#323232;"></div>
<div style="position:absolute;left:2694px;top:244px;width:2px;height:556px;background:#4a4a4a;"></div>
<div style="position:absolute;right:2372px;top:253.87px;font-family:'Liberation Mono', monospace;font-size:26px;line-height:26px;color:#606366;font-weight:normal;font-style:normal;letter-spacing:0px;white-space:pre;transform:scaleY(1.05);transform-origin:0 19.9px">4</div>
<div style="position:absolute;right:2372px;top:297.87px;font-family:'Liberation Mono', monospace;font-size:26px;line-height:26px;color:#606366;font-weight:normal;font-style:normal;letter-spacing:0px;white-space:pre;transform:scaleY(1.05);transform-origin:0 19.9px">5</div>
<div style="position:absolute;right:2372px;top:341.87px;font-family:'Liberation Mono', monospace;font-size:26px;line-height:26px;color:#606366;font-weight:normal;font-style:normal;letter-spacing:0px;white-space:pre;transform:scaleY(1.05);transform-origin:0 19.9px">9</div>
<div style="position:absolute;right:2372px;top:385.87px;font-family:'Liberation Mono', monospace;font-size:26px;line-height:26px;color:#606366;font-weight:normal;font-style:normal;letter-spacing:0px;white-space:pre;transform:scaleY(1.05);transform-origin:0 19.9px">10</div>
<div style="position:absolute;right:2372px;top:429.87px;font-family:'Liberation Mono', monospace;font-size:26px;line-height:26px;color:#606366;font-weight:normal;font-style:normal;letter-spacing:0px;white-space:pre;transform:scaleY(1.05);transform-origin:0 19.9px">11</div>
<div style="position:absolute;right:2372px;top:473.87px;font-family:'Liberation Mono', monospace;font-size:26px;line-height:26px;color:#606366;font-weight:normal;font-style:normal;letter-spacing:0px;white-space:pre;transform:scaleY(1.05);transform-origin:0 19.9px">12</div>
<div style="position:absolute;right:2372px;top:561.87px;font-family:'Liberation Mono', monospace;font-size:26px;line-height:26px;color:#a4a3a3;font-weight:normal;font-style:normal;letter-spacing:0px;white-space:pre;transform:scaleY(1.05);transform-origin:0 19.9px">13</div>
<div style="position:absolute;right:2372px;top:605.87px;font-family:'Liberation Mono', monospace;font-size:26px;line-height:26px;color:#606366;font-weight:normal;font-style:normal;letter-spacing:0px;white-space:pre;transform:scaleY(1.05);transform-origin:0 19.9px">14</div>
<div style="position:absolute;right:2372px;top:693.87px;font-family:'Liberation Mono', monospace;font-size:26px;line-height:26px;color:#606366;font-weight:normal;font-style:normal;letter-spacing:0px;white-space:pre;transform:scaleY(1.05);transform-origin:0 19.9px">15</div>
<div style="position:absolute;right:2372px;top:737.87px;font-family:'Liberation Mono', monospace;font-size:26px;line-height:26px;color:#606366;font-weight:normal;font-style:normal;letter-spacing:0px;white-space:pre;transform:scaleY(1.05);transform-origin:0 19.9px">16</div>
<div style="position:absolute;right:2372px;top:781.87px;font-family:'Liberation Mono', monospace;font-size:26px;line-height:26px;color:#606366;font-weight:normal;font-style:normal;letter-spacing:0px;white-space:pre;transform:scaleY(1.05);transform-origin:0 19.9px">17</div>
<div style="position:absolute;left:790px;top:550px;width:2.5px;height:250px;background:#5b877f;"></div>
<div style="position:absolute;left:809px;top:244px;width:2px;height:556px;background:#555759;"></div>
<svg style="position:absolute;left:801px;top:250.5px;overflow:visible;" width="18" height="25" viewBox="0 0 18 25"><path d="M1 10 L9 1.5 L17 10 L17 23.5 L1 23.5 Z" fill="#2b2b2b" stroke="#6e7072" stroke-width="2"/><path d="M5 16.5 H13" stroke="#6e7072" stroke-width="2"/></svg>
<svg style="position:absolute;left:801px;top:300px;overflow:visible;" width="18" height="19" viewBox="0 0 18 19"><rect x="1" y="1" width="16" height="17" fill="#2b2b2b" stroke="#6e7072" stroke-width="2"/><path d="M5 9.5 H13 M9 5.5 V13.5" stroke="#6e7072" stroke-width="2"/></svg>
<svg style="position:absolute;left:801px;top:388.5px;overflow:visible;" width="18" height="24" viewBox="0 0 18 24"><path d="M1 1 L17 1 L17 14 L9 22 L1 14 Z" fill="#2b2b2b" stroke="#6e7072" stroke-width="2"/><path d="M5 8.5 H13" stroke="#6e7072" stroke-width="2"/></svg>
<svg style="position:absolute;left:801px;top:470.5px;overflow:visible;" width="18" height="25" viewBox="0 0 18 25"><path d="M1 10 L9 1.5 L17 10 L17 23.5 L1 23.5 Z" fill="#2b2b2b" stroke="#6e7072" stroke-width="2"/><path d="M5 16.5 H13" stroke="#6e7072" stroke-width="2"/></svg>
<svg style="position:absolute;left:801px;top:740.5px;overflow:visible;" width="18" height="24" viewBox="0 0 18 24"><path d="M1 1 L17 1 L17 14 L9 22 L1 14 Z" fill="#2b2b2b" stroke="#6e7072" stroke-width="2"/><path d="M5 8.5 H13" stroke="#6e7072" stroke-width="2"/></svg>
<div style="position:absolute;left:809px;top:244px;width:2px;height:6px;background:#4b4d4f;"></div>
<svg style="position:absolute;left:748px;top:554px;overflow:visible;" width="30" height="34" viewBox="0 0 30 34"><circle cx="10" cy="14.3" r="10.3" fill="#4ca54c"/><path d="M3.6 14 L8.2 18.5 L14.8 10" stroke="#1c3a1c" stroke-width="2.6" fill="none"/><path d="M15.7 15.5 L27.2 23.4 L15.7 31.5 Z" fill="#4ca54c" stroke="#1f2b1f" stroke-width="1.6"/></svg>
<svg style="position:absolute;left:748px;top:730px;overflow:visible;" width="30" height="34" viewBox="0 0 30 34"><circle cx="10" cy="14.3" r="10.3" fill="#4ca54c"/><path d="M3.6 14 L8.2 18.5 L14.8 10" stroke="#1c3a1c" stroke-width="2.6" fill="none"/><path d="M15.7 15.5 L27.2 23.4 L15.7 31.5 Z" fill="#4ca54c" stroke="#1f2b1f" stroke-width="1.6"/></svg>
<div style="position:absolute;left:823.60px;top:253.87px;font-family:'Liberation Mono', monospace;font-size:26px;line-height:26px;white-space:pre;transform:scaleY(1.05);transform-origin:0 19.9px;-webkit-text-stroke:0.35px currentColor"><span style="color:#808080;"> * edu.princeton.cs.algs4 package. */</span></div>
<svg style="position:absolute;left:1133px;top:275px;overflow:visible;" width="66" height="9" viewBox="0 0 66 9"><path d="M1 5 L4 2 L9.4 6.8 L14.2 2 L19.4 6.8 L24.2 2 L29.6 6.8 L34.2 2 L39.4 6.8 L44.5 2 L49.6 6.8 L54.5 2 L59.6 6.8 L63 4" stroke="#6a9a62" stroke-width="1.7" fill="none"/></svg>
<div style="position:absolute;left:823.60px;top:297.87px;font-family:'Liberation Mono', monospace;font-size:26px;line-height:26px;white-space:pre;transform:scaleY(1.05);transform-origin:0 19.9px;-webkit-text-stroke:0.35px currentColor"><span style="color:#cc7832;">import</span><span style="color:#a9b7c6;"> </span></div>
<div style="position:absolute;left:928.8000000000001px;top:288px;width:50px;height:40px;background:#3b3b3b;"></div>
<div style="position:absolute;left:932.80px;top:297.87px;font-family:'Liberation Mono', monospace;font-size:26px;line-height:26px;white-space:pre;transform:scaleY(1.05);transform-origin:0 19.9px;-webkit-text-stroke:0.35px currentColor"><span style="color:#a9b7c6;">...</span></div>
<div style="position:absolute;left:823.60px;top:385.87px;font-family:'Liberation Mono', monospace;font-size:26px;line-height:26px;white-space:pre;transform:scaleY(1.05);transform-origin:0 19.9px;-webkit-text-stroke:0.35px currentColor"><span style="color:#629755;font-style:italic">/** Tests the GuitarString class.</span></div>
<div style="position:absolute;left:823.60px;top:429.87px;font-family:'Liberation Mono', monospace;font-size:26px;line-height:26px;white-space:pre;transform:scaleY(1.05);transform-origin:0 19.9px;-webkit-text-stroke:0.35px currentColor"><span style="color:#629755;font-style:italic"> *  </span><span style="color:#629755;font-style:italic;font-weight:bold;text-decoration:underline;text-underline-offset:4px">@author</span><span style="color:#629755;font-style:italic"> Josh Hug</span></div>
<div style="position:absolute;left:823.60px;top:473.87px;font-family:'Liberation Mono', monospace;font-size:26px;line-height:26px;white-space:pre;transform:scaleY(1.05);transform-origin:0 19.9px;-webkit-text-stroke:0.35px currentColor"><span style="color:#629755;font-style:italic"> */</span></div>
<div style="position:absolute;left:823.60px;top:561.87px;font-family:'Liberation Mono', monospace;font-size:26px;line-height:26px;white-space:pre;transform:scaleY(1.05);transform-origin:0 19.9px;-webkit-text-stroke:0.35px currentColor"><span style="color:#cc7832;">public class </span><span style="color:#a9b7c6;">TestGuitarString  </span></div>
<div style="position:absolute;left:1305px;top:550px;width:16px;height:44px;background:#3b514d;"></div>
<div style="position:absolute;left:1307.20px;top:561.87px;font-family:'Liberation Mono', monospace;font-size:26px;line-height:26px;white-space:pre;transform:scaleY(1.05);transform-origin:0 19.9px;-webkit-text-stroke:0.35px currentColor"><span style="color:#ffef28;font-weight:bold">{</span></div>
<div style="position:absolute;left:1321px;top:555px;width:3px;height:34px;background:#bbbbbb;"></div>
<div style="position:absolute;left:886.00px;top:693.87px;font-family:'Liberation Mono', monospace;font-size:26px;line-height:26px;white-space:pre;transform:scaleY(1.05);transform-origin:0 19.9px;-webkit-text-stroke:0.35px currentColor"><span style="color:#bbb529;">@Test</span></div>
<div style="position:absolute;left:886.00px;top:737.87px;font-family:'Liberation Mono', monospace;font-size:26px;line-height:26px;white-space:pre;transform:scaleY(1.05);transform-origin:0 19.9px;-webkit-text-stroke:0.35px currentColor"><span style="color:#cc7832;">public void </span><span style="color:#ffc66d;">testPluckTheAString</span><span style="color:#a9b7c6;">() {</span></div>
<div style="position:absolute;left:948.40px;top:781.87px;font-family:'Liberation Mono', monospace;font-size:26px;line-height:26px;white-space:pre;transform:scaleY(1.05);transform-origin:0 19.9px;-webkit-text-stroke:0.35px currentColor"><span style="color:#cc7832;">double </span><span style="color:#a9b7c6;">CONCERT_A = </span><span style="color:#6897bb;">440.0</span><span style="color:#cc7832;">;</span></div>
<div style="position:absolute;left:881px;top:770px;width:2px;height:30px;background:#3b3b3b;"></div>
<svg style="position:absolute;left:826px;top:518.5px;overflow:visible;" width="16" height="18" viewBox="0 0 16 18"><circle cx="8" cy="5" r="4.3" fill="#8c8c8c"/><path d="M0 17 C0 11 3 9.5 8 9.5 C13 9.5 16 11 16 17 Z" fill="#8c8c8c"/></svg>
<div style="position:absolute;left:851px;top:517.35px;font-family:'Liberation Sans', sans-serif;font-size:25px;line-height:25px;color:#8c8c8c;font-weight:normal;font-style:normal;letter-spacing:0px;white-space:pre;">Jedidiah Tsang</div>
<svg style="position:absolute;left:888px;top:650.5px;overflow:visible;" width="16" height="18" viewBox="0 0 16 18"><circle cx="8" cy="5" r="4.3" fill="#8c8c8c"/><path d="M0 17 C0 11 3 9.5 8 9.5 C13 9.5 16 11 16 17 Z" fill="#8c8c8c"/></svg>
<div style="position:absolute;left:913px;top:649.35px;font-family:'Liberation Sans', sans-serif;font-size:25px;line-height:25px;color:#8c8c8c;font-weight:normal;font-style:normal;letter-spacing:0px;white-space:pre;">Jedidiah Tsang</div>
<svg style="position:absolute;left:2750px;top:258px;overflow:visible;" width="24" height="22" viewBox="0 0 24 22"><path d="M12 0 L24 22 L0 22 Z" fill="#e2a22d"/><rect x="10.5" y="7" width="3" height="8" fill="#2b2b2b"/><rect x="10.5" y="17" width="3" height="3" fill="#2b2b2b"/></svg>
<div style="position:absolute;left:2781px;top:260.54px;font-family:'Liberation Sans', sans-serif;font-size:23px;line-height:23px;color:#bbbbbb;font-weight:normal;font-style:normal;letter-spacing:0px;white-space:pre;">2</div>
<svg style="position:absolute;left:2810px;top:261px;overflow:visible;" width="24" height="24" viewBox="0 0 24 24"><path d="M1 9 L7.5 15 L22 1" stroke="#4eae4e" stroke-width="3.6" fill="none"/><path d="M1 23 L5 19 L9 23 L13 19 L17 23" stroke="#4eae4e" stroke-width="2" fill="none"/></svg>
<div style="position:absolute;left:2841px;top:260.54px;font-family:'Liberation Sans', sans-serif;font-size:23px;line-height:23px;color:#bbbbbb;font-weight:normal;font-style:normal;letter-spacing:0px;white-space:pre;">3</div>
<svg style="position:absolute;left:2875px;top:264px;overflow:visible;" width="18" height="11" viewBox="0 0 18 11"><path d="M1 10 L9 2 L17 10" stroke="#afb1b3" stroke-width="2.6" fill="none"/></svg>
<svg style="position:absolute;left:2917px;top:264px;overflow:visible;" width="18" height="11" viewBox="0 0 18 11"><path d="M1 1 L9 9 L17 1" stroke="#afb1b3" stroke-width="2.6" fill="none"/></svg>
<div style="position:absolute;left:2928px;top:317px;width:15px;height:62px;background:#4a4b4c;border-radius:8px"></div>
<div style="position:absolute;left:2922px;top:674px;width:28px;height:5px;background:#c9a227;"></div>
<div style="position:absolute;left:2922px;top:684px;width:28px;height:5px;background:#c9a227;"></div>
<div style="position:absolute;left:2951px;top:190px;width:41px;height:1435px;background:#3c3f41;"></div>
<div style="position:absolute;left:2949px;top:190px;width:2px;height:1435px;background:#2b2b2b;"></div>
<svg style="position:absolute;left:2959px;top:212px;overflow:visible;" width="26" height="26" viewBox="0 0 26 26"><path d="M3 19 C3 10 5 4 11.5 4 C18 4 20 10 20 19 L23 21 L0 21 Z" fill="#afb1b3"/><path d="M9 23 H14 L11.5 26 Z" fill="#afb1b3"/><circle cx="21" cy="5" r="5" fill="#e05555"/></svg>
<div style="position:absolute;left:2972px;top:310px;width:0;height:0"><div style="position:absolute;transform:translate(-50%,-50%) rotate(90deg);font-family:'Liberation Sans', sans-serif;font-size:23.5px;line-height:23.5px;color:#bbbbbb;white-space:pre">Notifications</div></div>
<div style="position:absolute;left:154px;top:800px;width:2797px;height:2px;background:#2b2b2b;"></div>
<div style="position:absolute;left:154px;top:802px;width:2797px;height:52px;background:#3c3f41;"></div>
<div style="position:absolute;left:167px;top:816.85px;font-family:'Liberation Sans', sans-serif;font-size:25px;line-height:25px;color:#bbbbbb;font-weight:normal;font-style:normal;letter-spacing:0.3px;white-space:pre;">Run:</div>
<svg style="position:absolute;left:264px;top:817px;overflow:visible;" width="24" height="24" viewBox="0 0 24 24"><path d="M10 1 L10 23 L0 12 Z" fill="#a4502e"/><path d="M14 1 L24 12 L14 23 Z" fill="#4c8a3f"/></svg>
<div style="position:absolute;left:301px;top:814.74px;font-family:'Liberation Sans', sans-serif;font-size:27.5px;line-height:27.5px;color:#bbbbbb;font-weight:normal;font-style:normal;letter-spacing:0.1px;white-space:pre;">TestGuitarString</div>
<svg style="position:absolute;left:516px;top:822px;overflow:visible;" width="16" height="16" viewBox="0 0 16 16"><path d="M1 1 L15 15 M15 1 L1 15" stroke="#7f8284" stroke-width="1.8"/></svg>
<div style="position:absolute;left:236px;top:850px;width:318px;height:6px;background:#7b7f83;border-radius:3px"></div>
<svg style="position:absolute;left:2859.3px;top:815.3px;overflow:visible;" width="25.4" height="25.4" viewBox="0 0 25.4 25.4"><rect x="9.7" y="0" width="6" height="6" fill="#afb1b3" transform="rotate(0 12.7 12.7)"/><rect x="9.7" y="0" width="6" height="6" fill="#afb1b3" transform="rotate(60 12.7 12.7)"/><rect x="9.7" y="0" width="6" height="6" fill="#afb1b3" transform="rotate(120 12.7 12.7)"/><rect x="9.7" y="0" width="6" height="6" fill="#afb1b3" transform="rotate(180 12.7 12.7)"/><rect x="9.7" y="0" width="6" height="6" fill="#afb1b3" transform="rotate(240 12.7 12.7)"/><rect x="9.7" y="0" width="6" height="6" fill="#afb1b3" transform="rotate(300 12.7 12.7)"/><circle cx="12.7" cy="12.7" r="9.906" fill="#afb1b3"/><circle cx="12.7" cy="12.7" r="4.4" fill="#3c3f41"/></svg>
<div style="position:absolute;left:2912px;top:826px;width:24px;height:4px;background:#afb1b3;"></div>
<div style="position:absolute;left:154px;top:854px;width:2797px;height:2px;background:#2b2b2b;"></div>
<div style="position:absolute;left:213px;top:856px;width:2738px;height:56px;background:#3c3f41;"></div>
<div style="position:absolute;left:220px;top:862px;width:44px;height:44px;background:#5b5e61;border-radius:4px"></div>
<div style="position:absolute;left:272px;top:862px;width:44px;height:44px;background:#5b5e61;border-radius:4px"></div>
<svg style="position:absolute;left:229px;top:872px;overflow:visible;" width="26" height="22" viewBox="0 0 26 22"><path d="M2 11 L10 19 L24 3" stroke="#c9cbcd" stroke-width="3.6" fill="none"/></svg>
<svg style="position:absolute;left:281px;top:871px;overflow:visible;" width="26" height="26" viewBox="0 0 26 26"><circle cx="13" cy="13" r="11" stroke="#c9cbcd" stroke-width="3" fill="none"/><path d="M5.5 20.5 L20.5 5.5" stroke="#c9cbcd" stroke-width="3"/></svg>
<div style="position:absolute;left:326px;top:864px;width:2px;height:40px;background:#555759;"></div>
<svg style="position:absolute;left:346px;top:871px;overflow:visible;" width="27" height="26" viewBox="0 0 27 26"><path d="M8 0 V20" stroke="#afb1b3" stroke-width="3"/><path d="M0 16 L16 16 L8 25 Z" fill="#afb1b3"/><text x="17" y="10" font-family="Liberation Sans" font-size="12" font-weight="bold" fill="#afb1b3">a</text><text x="17" y="25" font-family="Liberation Sans" font-size="12" font-weight="bold" fill="#afb1b3">z</text></svg>
<svg style="position:absolute;left:398px;top:871px;overflow:visible;" width="28" height="26" viewBox="0 0 28 26"><path d="M8 0 V20" stroke="#afb1b3" stroke-width="3"/><path d="M0 16 L16 16 L8 25 Z" fill="#afb1b3"/><rect x="14" y="1" width="14" height="3" fill="#afb1b3"/><rect x="18" y="9" width="10" height="3" fill="#afb1b3"/><rect x="22" y="17" width="6" height="3" fill="#afb1b3"/></svg>
<div style="position:absolute;left:444px;top:864px;width:2px;height:40px;background:#555759;"></div>
<svg style="position:absolute;left:466px;top:870px;overflow:visible;" width="24" height="28" viewBox="0 0 24 28"><rect x="0" y="0" width="24" height="3" fill="#afb1b3"/><rect x="0" y="25" width="24" height="3" fill="#afb1b3"/><path d="M4 12 L12 6 L20 12 Z M4 16 L20 16 L12 22 Z" fill="#afb1b3"/></svg>
<svg style="position:absolute;left:518px;top:870px;overflow:visible;" width="24" height="28" viewBox="0 0 24 28"><rect x="0" y="12.5" width="24" height="3" fill="#afb1b3"/><path d="M5 0 H19 L12 7 Z M12 21 L19 28 H5 Z" fill="#afb1b3"/></svg>
<div style="position:absolute;left:562px;top:864px;width:2px;height:40px;background:#555759;"></div>
<svg style="position:absolute;left:586px;top:872px;overflow:visible;" width="20" height="24" viewBox="0 0 20 24"><path d="M10 3 V24" stroke="#6e7072" stroke-width="3"/><path d="M0 10 L10 0 L20 10" stroke="#6e7072" stroke-width="3" fill="none"/></svg>
<svg style="position:absolute;left:638px;top:872px;overflow:visible;" width="20" height="24" viewBox="0 0 20 24"><path d="M10 0 V21" stroke="#6e7072" stroke-width="3"/><path d="M0 14 L10 24 L20 14" stroke="#6e7072" stroke-width="3" fill="none"/></svg>
<svg style="position:absolute;left:686px;top:870px;overflow:visible;" width="34" height="32" viewBox="0 0 34 32"><circle cx="14" cy="14" r="12" stroke="#afb1b3" stroke-width="3.2" fill="none"/><path d="M13.5 7 L13.5 15 L18.5 19" stroke="#afb1b3" stroke-width="3" fill="none"/><path d="M21 24 L31 24 L26 29 Z" fill="#afb1b3"/></svg>
<svg style="position:absolute;left:735px;top:878px;overflow:visible;" width="16" height="12" viewBox="0 0 16 12"><path d="M1 1 L6 6 L1 11 M9 1 L14 6 L9 11" stroke="#afb1b3" stroke-width="1.8" fill="none"/></svg>
<svg style="position:absolute;left:770px;top:872px;overflow:visible;" width="26" height="22" viewBox="0 0 26 22"><path d="M2 11 L9.5 18.5 L24 3" stroke="#4eae4e" stroke-width="4" fill="none"/></svg>
<div style="position:absolute;left:805px;top:868.74px;font-family:'Liberation Sans', sans-serif;font-size:27.5px;line-height:27.5px;color:#bbbbbb;font-weight:normal;font-style:normal;letter-spacing:0.1px;white-space:pre;">Tests passed: 4</div>
<div style="position:absolute;left:1008px;top:868.99px;font-family:'Liberation Sans', sans-serif;font-size:27.2px;line-height:27.2px;color:#8c8c8c;font-weight:normal;font-style:normal;letter-spacing:0px;white-space:pre;">of 4 tests – 1 sec 166 ms</div>
<div style="position:absolute;left:213px;top:912px;width:2738px;height:2px;background:#2b2b2b;"></div>
<div style="position:absolute;left:154px;top:856px;width:57px;height:769px;background:#3c3f41;"></div>
<div style="position:absolute;left:210px;top:856px;width:2px;height:769px;background:#2b2b2b;"></div>
<svg style="position:absolute;left:174px;top:872px;overflow:visible;" width="20" height="24" viewBox="0 0 20 24"><path d="M0 0 L20 12 L0 24 Z" fill="#4eae4e"/></svg>
<svg style="position:absolute;left:168px;top:922px;overflow:visible;" width="30" height="26" viewBox="0 0 30 26"><path d="M0 8 L14 17 L0 26 Z" fill="#5c5e60"/><circle cx="18" cy="12" r="11" fill="#5c5e60"/><rect x="16" y="4" width="4" height="9" fill="#3c3f41"/><rect x="16" y="15" width="4" height="4" fill="#3c3f41"/></svg>
<svg style="position:absolute;left:168px;top:972px;overflow:visible;" width="28" height="30" viewBox="0 0 28 30"><path d="M22 6 C19 2.5 15 1.5 11 2.5 C6 4 3 8 3 12" stroke="#afb1b3" stroke-width="3" fill="none"/><path d="M18 0 L26 2 L21 9 Z" fill="#afb1b3"/><path d="M6 24 C9 27.5 13 28.5 17 27.5 C22 26 25 22 25 18" stroke="#afb1b3" stroke-width="3" fill="none"/><path d="M10 30 L2 28 L7 21 Z" fill="#afb1b3"/><rect x="0" y="11" width="7" height="7" stroke="#afb1b3" stroke-width="2" fill="none"/><rect x="20" y="11" width="7" height="7" stroke="#afb1b3" stroke-width="2" fill="none"/></svg>
<svg style="position:absolute;left:168px;top:1026px;overflow:visible;" width="27" height="27" viewBox="0 0 27 27"><path d="M2 25 L14 13" stroke="#afb1b3" stroke-width="5" stroke-linecap="round"/><path d="M11 10 C10 4 15 0 21 1 L17 6 L19 9 L22 10 L26 6 C27 12 23 17 17 16 Z" fill="#afb1b3"/></svg>
<div style="position:absolute;left:162px;top:1072px;width:40px;height:2px;background:#4e5254;"></div>
<div style="position:absolute;left:172px;top:1096px;width:20px;height:20px;background:#5c5c5c;"></div>
<svg style="position:absolute;left:168px;top:1146px;overflow:visible;" width="28" height="24" viewBox="0 0 28 24"><path d="M0 4 L8 4 L10 0 L18 0 L20 4 L28 4 L28 24 L0 24 Z" fill="#5c5c5c"/><circle cx="14" cy="14" r="5.5" stroke="#3c3f41" stroke-width="2.5" fill="none"/></svg>
<svg style="position:absolute;left:170px;top:1196px;overflow:visible;" width="28" height="29" viewBox="0 0 28 29"><g fill="#5c5c5c"><path d="M5 0 L8.5 4 L13.5 4 L17 0 L18.5 1.5 L15.5 5 C17.5 6 18 8 18 9 L22 9 L22 12 L18 12 L18 14 L13 14 L13 23 L8 23 L8 14 L4 14 L4 12 L0 12 L0 9 L4 9 C4 8 4.5 6 6.5 5 L3.5 1.5 Z M0 16 H10 V19 H0 Z M0 22 H10 V25 H0 Z"/><path d="M14 27 L23 18" stroke="#5c5c5c" stroke-width="4"/><path d="M17 14 L28 14 L28 25 Z"/></g></svg>
<svg style="position:absolute;left:168px;top:1246px;overflow:visible;" width="28" height="28" viewBox="0 0 28 28"><path d="M8 0 H27 V28 H8 V22 H11 V25 H24 V3 H11 V6 H8 Z" fill="#5c5c5c"/><path d="M0 12.5 H12 V8 L19 14 L12 20 V15.5 H0 Z" fill="#5c5c5c"/></svg>
<div style="position:absolute;left:162px;top:1294px;width:40px;height:2px;background:#4e5254;"></div>
<svg style="position:absolute;left:170px;top:1318px;overflow:visible;" width="24" height="20" viewBox="0 0 24 20"><rect x="0" y="0" width="11" height="9" fill="#afb1b3"/><rect x="12.5" y="0" width="11.5" height="9" fill="#afb1b3"/><rect x="0" y="10.5" width="24" height="8.5" fill="#afb1b3"/></svg>
<div style="position:absolute;left:162px;top:1360px;width:40px;height:2px;background:#4e5254;"></div>
<svg style="position:absolute;left:168px;top:1378px;overflow:visible;" width="28" height="30" viewBox="0 0 28 30"><path d="M2 28 L12 18" stroke="#afb1b3" stroke-width="2.5"/><path d="M14 0 L28 14 L24 14 L19 19 L19 25 L3 9 L9 9 L14 4 Z" fill="#afb1b3"/></svg>
<div style="position:absolute;left:213px;top:914px;width:547px;height:711px;background:#3c3f41;"></div>
<div style="position:absolute;left:213px;top:914px;width:547px;height:40px;background:#0d293e;"></div>
<svg style="position:absolute;left:225px;top:929px;overflow:visible;" width="18" height="11" viewBox="0 0 18 11"><path d="M1 1 L9 9.5 L17 1" stroke="#afb1b3" stroke-width="2.2" fill="none"/></svg>
<svg style="position:absolute;left:262px;top:923px;overflow:visible;" width="26" height="22" viewBox="0 0 26 22"><path d="M2 9 L9.5 17.5 L23.5 4" stroke="#579b4c" stroke-width="5.2" fill="none"/></svg>
<div style="position:absolute;left:297px;top:919.98px;font-family:'Liberation Sans', sans-serif;font-size:27.8px;line-height:27.8px;color:#bbbbbb;font-weight:normal;font-style:normal;letter-spacing:0px;white-space:pre;">TestGuitarString</div>
<div style="position:absolute;left:507px;top:919.98px;font-family:'Liberation Sans', sans-serif;font-size:27.8px;line-height:27.8px;color:#8c8c8c;font-weight:normal;font-style:normal;letter-spacing:0px;white-space:pre;">(gh2)</div>
<div style="position:absolute;right:2353px;top:923.20px;font-family:'Liberation Sans', sans-serif;font-size:24px;line-height:24px;color:#bbbbbb;font-weight:normal;font-style:normal;letter-spacing:-0.3px;white-space:pre;">1 sec 166 ms</div>
<svg style="position:absolute;left:298px;top:963px;overflow:visible;" width="26" height="22" viewBox="0 0 26 22"><path d="M2 9 L9.5 17.5 L23.5 4" stroke="#579b4c" stroke-width="5.2" fill="none"/></svg>
<div style="position:absolute;left:333px;top:959.98px;font-family:'Liberation Sans', sans-serif;font-size:27.8px;line-height:27.8px;color:#bbbbbb;font-weight:normal;font-style:normal;letter-spacing:0px;white-space:pre;">testTic</div>
<div style="position:absolute;right:2353px;top:963.20px;font-family:'Liberation Sans', sans-serif;font-size:24px;line-height:24px;color:#8c8c8c;font-weight:normal;font-style:normal;letter-spacing:-0.3px;white-space:pre;">6 ms</div>
<svg style="position:absolute;left:298px;top:1003px;overflow:visible;" width="26" height="22" viewBox="0 0 26 22"><path d="M2 9 L9.5 17.5 L23.5 4" stroke="#579b4c" stroke-width="5.2" fill="none"/></svg>
<div style="position:absolute;left:333px;top:999.98px;font-family:'Liberation Sans', sans-serif;font-size:27.8px;line-height:27.8px;color:#bbbbbb;font-weight:normal;font-style:normal;letter-spacing:0px;white-space:pre;">testTicCalculations</div>
<div style="position:absolute;right:2353px;top:1003.20px;font-family:'Liberation Sans', sans-serif;font-size:24px;line-height:24px;color:#8c8c8c;font-weight:normal;font-style:normal;letter-spacing:-0.3px;white-space:pre;">0 ms</div>
<svg style="position:absolute;left:298px;top:1043px;overflow:visible;" width="26" height="22" viewBox="0 0 26 22"><path d="M2 9 L9.5 17.5 L23.5 4" stroke="#579b4c" stroke-width="5.2" fill="none"/></svg>
<div style="position:absolute;left:333px;top:1039.98px;font-family:'Liberation Sans', sans-serif;font-size:27.8px;line-height:27.8px;color:#bbbbbb;font-weight:normal;font-style:normal;letter-spacing:0px;white-space:pre;">testPluckTheAString</div>
<div style="position:absolute;right:2353px;top:1043.20px;font-family:'Liberation Sans', sans-serif;font-size:24px;line-height:24px;color:#8c8c8c;font-weight:normal;font-style:normal;letter-spacing:-0.3px;white-space:pre;">1 sec 160 ms</div>
<svg style="position:absolute;left:298px;top:1083px;overflow:visible;" width="26" height="22" viewBox="0 0 26 22"><path d="M2 9 L9.5 17.5 L23.5 4" stroke="#579b4c" stroke-width="5.2" fill="none"/></svg>
<div style="position:absolute;left:333px;top:1079.98px;font-family:'Liberation Sans', sans-serif;font-size:27.8px;line-height:27.8px;color:#bbbbbb;font-weight:normal;font-style:normal;letter-spacing:0px;white-space:pre;">testSample</div>
<div style="position:absolute;right:2353px;top:1083.20px;font-family:'Liberation Sans', sans-serif;font-size:24px;line-height:24px;color:#8c8c8c;font-weight:normal;font-style:normal;letter-spacing:-0.3px;white-space:pre;">0 ms</div>
<div style="position:absolute;left:760px;top:914px;width:2px;height:711px;background:#2b2b2b;"></div>
<div style="position:absolute;left:762px;top:914px;width:2131px;height:711px;background:#2b2b2b;"></div>
<div style="position:absolute;left:786px;top:914px;width:1170px;height:44px;background:#383838;"></div>
<div style="position:absolute;left:788px;top:925.57px;font-family:'Liberation Mono', monospace;font-size:26px;line-height:26px;color:#8c8c8c;white-space:pre;transform:scaleY(1.05);transform-origin:0 19.9px;-webkit-text-stroke:0.35px #8c8c8c">/Library/Java/JavaVirtualMachines/temurin-17.jdk/Contents/Home/bin/java ...</div>
<div style="position:absolute;left:788px;top:1014.07px;font-family:'Liberation Mono', monospace;font-size:26px;line-height:26px;color:#bbbbbb;white-space:pre;transform:scaleY(1.05);transform-origin:0 19.9px;-webkit-text-stroke:0.35px #bbbbbb">Process finished with exit code 0</div>
<div style="position:absolute;left:2893px;top:912px;width:58px;height:713px;background:#3c3f41;"></div>
<svg style="position:absolute;left:2912px;top:930px;overflow:visible;" width="20" height="24" viewBox="0 0 20 24"><path d="M10 4 V24" stroke="#606265" stroke-width="4"/><path d="M1.5 11.5 L10 2.5 L18.5 11.5" stroke="#606265" stroke-width="4" fill="none"/></svg>
<svg style="position:absolute;left:2912px;top:982px;overflow:visible;" width="20" height="25" viewBox="0 0 20 25"><path d="M10 0 V20" stroke="#606265" stroke-width="4"/><path d="M1.5 13 L10 22 L18.5 13" stroke="#606265" stroke-width="4" fill="none"/></svg>
<svg style="position:absolute;left:2910px;top:1034px;overflow:visible;" width="24" height="28" viewBox="0 0 24 28"><rect x="0" y="0" width="24" height="4" fill="#afb1b3"/><path d="M0 11 H17 C24 11 24 22 17 22 H12" stroke="#afb1b3" stroke-width="4" fill="none"/><path d="M13 16 L6 22 L13 28 Z" fill="#afb1b3"/><rect x="0" y="20" width="5.5" height="4" fill="#afb1b3"/></svg>
<svg style="position:absolute;left:2910px;top:1083px;overflow:visible;" width="24" height="26" viewBox="0 0 24 26"><rect x="0" y="5" width="8" height="4" fill="#afb1b3"/><rect x="0" y="13" width="8" height="4" fill="#afb1b3"/><rect x="16.5" y="0" width="4" height="13" fill="#afb1b3"/><path d="M11 12 L26 12 L18.5 19.5 Z" fill="#afb1b3"/><rect x="0" y="21" width="24" height="4" fill="#afb1b3"/></svg>
<svg style="position:absolute;left:2907px;top:1138px;overflow:visible;" width="29" height="27" viewBox="0 0 29 27"><rect x="7" y="0" width="16" height="5" fill="#afb1b3"/><rect x="0" y="8" width="29" height="12" rx="2" fill="#afb1b3"/><rect x="7" y="15" width="16" height="11" fill="#3c3f41" stroke="#afb1b3" stroke-width="2.6"/><circle cx="25" cy="11.5" r="1.2" fill="#3c3f41"/></svg>
<svg style="position:absolute;left:2912px;top:1188px;overflow:visible;" width="20" height="26" viewBox="0 0 20 26"><rect x="0" y="2" width="20" height="4" fill="#afb1b3"/><rect x="6" y="0" width="8" height="3" fill="#afb1b3"/><path d="M2 7.5 H18 V23 C18 25 17 26 15 26 H5 C3 26 2 25 2 23 Z" fill="#afb1b3"/></svg>
<div style="position:absolute;left:112px;top:1624px;width:2880px;height:2px;background:#2b2b2b;"></div>
<div style="position:absolute;left:112px;top:1626px;width:2880px;height:44px;background:#3c3f41;"></div>
<div style="position:absolute;left:256px;top:1626px;width:110px;height:44px;background:#2b2b2b;"></div>
<svg style="position:absolute;left:177px;top:1636px;overflow:visible;" width="26" height="26" viewBox="0 0 26 26"><path d="M4 2 V24 M4 18 C4 12 15 14 15 6" stroke="#afb1b3" stroke-width="3" fill="none"/><circle cx="4" cy="3" r="3" fill="#afb1b3"/><circle cx="4" cy="23" r="3" fill="#afb1b3"/><circle cx="15" cy="5" r="3" fill="#afb1b3"/></svg>
<div style="position:absolute;left:208px;top:1638.13px;font-family:'Liberation Sans', sans-serif;font-size:22.3px;line-height:22.3px;color:#bbbbbb;font-weight:normal;font-style:normal;letter-spacing:0px;white-space:pre;">Git</div>
<svg style="position:absolute;left:279px;top:1636px;overflow:visible;" width="26" height="26" viewBox="0 0 26 26"><path d="M1 2 L17 12 L1 22 Z" fill="#afb1b3"/></svg>
<div style="position:absolute;left:310px;top:1638.13px;font-family:'Liberation Sans', sans-serif;font-size:22.3px;line-height:22.3px;color:#ffffff;font-weight:normal;font-style:normal;letter-spacing:0px;white-space:pre;">Run</div>
<svg style="position:absolute;left:391px;top:1636px;overflow:visible;" width="26" height="26" viewBox="0 0 26 26"><path d="M5 0 L8.5 4 L12.5 4 L16 0 L17.5 1.5 L14.5 5 C17 6 18 8 18 10 L21 10 L21 13 L18 13 L18 16 L21 16 L21 19 L18 19 C17 23 14 26 10.5 26 C7 26 4 23 3 19 L0 19 L0 16 L3 16 L3 13 L0 13 L0 10 L3 10 C3 8 4 6 6.5 5 L3.5 1.5 Z" fill="#afb1b3"/></svg>
<div style="position:absolute;left:422.5px;top:1638.13px;font-family:'Liberation Sans', sans-serif;font-size:22.3px;line-height:22.3px;color:#bbbbbb;font-weight:normal;font-style:normal;letter-spacing:0px;white-space:pre;">Debug</div>
<svg style="position:absolute;left:534px;top:1636px;overflow:visible;" width="26" height="26" viewBox="0 0 26 26"><path d="M12 1 L24 7 L12 13 L0 7 Z" fill="#afb1b3"/><path d="M0 12 L12 18 L24 12" stroke="#afb1b3" stroke-width="2.6" fill="none"/><path d="M0 17 L12 23 L24 17" stroke="#afb1b3" stroke-width="2.6" fill="none"/></svg>
<div style="position:absolute;left:568.5px;top:1638.13px;font-family:'Liberation Sans', sans-serif;font-size:22.3px;line-height:22.3px;color:#bbbbbb;font-weight:normal;font-style:normal;letter-spacing:0px;white-space:pre;">Python Packages</div>
<svg style="position:absolute;left:788px;top:1636px;overflow:visible;" width="26" height="26" viewBox="0 0 26 26"><rect x="0" y="4" width="4" height="3" fill="#afb1b3"/><rect x="6" y="4" width="16" height="3" fill="#afb1b3"/><rect x="0" y="11" width="4" height="3" fill="#afb1b3"/><rect x="6" y="11" width="16" height="3" fill="#afb1b3"/><rect x="0" y="18" width="4" height="3" fill="#afb1b3"/><rect x="6" y="18" width="16" height="3" fill="#afb1b3"/></svg>
<div style="position:absolute;left:820px;top:1638.13px;font-family:'Liberation Sans', sans-serif;font-size:22.3px;line-height:22.3px;color:#bbbbbb;font-weight:normal;font-style:normal;letter-spacing:0px;white-space:pre;">TODO</div>
<svg style="position:absolute;left:923px;top:1636px;overflow:visible;" width="26" height="26" viewBox="0 0 26 26"><circle cx="11" cy="12" r="10.5" fill="#afb1b3"/><rect x="9.3" y="5" width="3.4" height="9" fill="#3c3f41"/><rect x="9.3" y="16" width="3.4" height="3.4" fill="#3c3f41"/></svg>
<div style="position:absolute;left:956.6px;top:1638.13px;font-family:'Liberation Sans', sans-serif;font-size:22.3px;line-height:22.3px;color:#bbbbbb;font-weight:normal;font-style:normal;letter-spacing:0px;white-space:pre;">Problems</div>
<svg style="position:absolute;left:1096px;top:1636px;overflow:visible;" width="26" height="26" viewBox="0 0 26 26"><rect x="0" y="2" width="22" height="20" fill="#afb1b3"/><path d="M3 6 L9 11 L3 16" stroke="#3c3f41" stroke-width="2.4" fill="none"/><rect x="10" y="15" width="9" height="2.4" fill="#3c3f41"/></svg>
<div style="position:absolute;left:1129px;top:1638.13px;font-family:'Liberation Sans', sans-serif;font-size:22.3px;line-height:22.3px;color:#bbbbbb;font-weight:normal;font-style:normal;letter-spacing:0px;white-space:pre;">Terminal</div>
<svg style="position:absolute;left:1261px;top:1636px;overflow:visible;" width="26" height="26" viewBox="0 0 26 26"><rect x="0" y="1" width="25" height="24" fill="#6e7072"/><path d="M9 5 H6 V21 H9 M16 5 H19 V21 H16" stroke="#3c3f41" stroke-width="2.6" fill="none"/></svg>
<div style="position:absolute;left:1298.6px;top:1638.13px;font-family:'Liberation Sans', sans-serif;font-size:22.3px;line-height:22.3px;color:#bbbbbb;font-weight:normal;font-style:normal;letter-spacing:0px;white-space:pre;">Style Checker</div>
<svg style="position:absolute;left:1483px;top:1636px;overflow:visible;" width="26" height="26" viewBox="0 0 26 26"><path d="M6 1 H19 L25 13 L19 25 H6 L0 13 Z" fill="#afb1b3"/><path d="M9 7 L18 13 L9 19 Z" fill="#3c3f41"/></svg>
<div style="position:absolute;left:1518.6px;top:1638.13px;font-family:'Liberation Sans', sans-serif;font-size:22.3px;line-height:22.3px;color:#bbbbbb;font-weight:normal;font-style:normal;letter-spacing:0px;white-space:pre;">Services</div>
<svg style="position:absolute;left:1643px;top:1636px;overflow:visible;" width="26" height="26" viewBox="0 0 26 26"><path d="M1 8 L8 1 L13 4 L10 7 L24 22 L21 25 L7 10 L4 12 Z" fill="#afb1b3"/></svg>
<div style="position:absolute;left:1678px;top:1638.13px;font-family:'Liberation Sans', sans-serif;font-size:22.3px;line-height:22.3px;color:#bbbbbb;font-weight:normal;font-style:normal;letter-spacing:0px;white-space:pre;">Build</div>
<div style="position:absolute;left:112px;top:1670px;width:2880px;height:2px;background:#323537;"></div>
<div style="position:absolute;left:112px;top:1672px;width:2880px;height:40px;background:#3c3f41;"></div>
<svg style="position:absolute;left:124px;top:1680px;overflow:visible;" width="24" height="24" viewBox="0 0 24 24"><rect x="5" y="1" width="18" height="17" stroke="#afb1b3" stroke-width="2" fill="none"/><path d="M1 5 V23 H19" stroke="#afb1b3" stroke-width="2" fill="none"/></svg>
<div style="position:absolute;left:174px;top:1680.80px;font-family:'Liberation Sans', sans-serif;font-size:22.7px;line-height:22.7px;color:#bbbbbb;font-weight:normal;font-style:normal;letter-spacing:0px;white-space:pre;">Tests passed: 4 (moments ago)</div>
<div style="position:absolute;left:2505px;top:1681.39px;font-family:'Liberation Sans', sans-serif;font-size:22px;line-height:22px;color:#bbbbbb;font-weight:normal;font-style:normal;letter-spacing:0px;white-space:pre;">13:33</div>
<div style="position:absolute;left:2584px;top:1681.39px;font-family:'Liberation Sans', sans-serif;font-size:22px;line-height:22px;color:#bbbbbb;font-weight:normal;font-style:normal;letter-spacing:0px;white-space:pre;">LF</div>
<div style="position:absolute;left:2632.5px;top:1680.71px;font-family:'Liberation Sans', sans-serif;font-size:22.8px;line-height:22.8px;color:#bbbbbb;font-weight:normal;font-style:normal;letter-spacing:0px;white-space:pre;">UTF-8</div>
<div style="position:absolute;left:2722.6px;top:1680.88px;font-family:'Liberation Sans', sans-serif;font-size:22.6px;line-height:22.6px;color:#bbbbbb;font-weight:normal;font-style:normal;letter-spacing:0px;white-space:pre;">4 spaces</div>
<svg style="position:absolute;left:2844px;top:1678px;overflow:visible;" width="28" height="28" viewBox="0 0 28 28"><path d="M4 3 V24 M4 19 C4 13 16 14 16 5" stroke="#afb1b3" stroke-width="3" fill="none"/><circle cx="4" cy="4" r="3" fill="#afb1b3"/><circle cx="4" cy="23" r="3" fill="#afb1b3"/><circle cx="16" cy="5" r="3" fill="#afb1b3"/><circle cx="20" cy="22" r="6" fill="#3592c4"/></svg>
<div style="position:absolute;left:2874.5px;top:1681.39px;font-family:'Liberation Sans', sans-serif;font-size:22px;line-height:22px;color:#bbbbbb;font-weight:normal;font-style:normal;letter-spacing:0px;white-space:pre;">main</div>
<svg style="position:absolute;left:2942px;top:1680px;overflow:visible;" width="24" height="24" viewBox="0 0 24 24"><path d="M3 11 V6 C3 2 9 2 9 6" stroke="#afb1b3" stroke-width="2.6" fill="none"/><rect x="7" y="11" width="17" height="13" fill="#afb1b3"/></svg>
<div style="position:absolute;left:2949px;top:190px;width:2px;height:1435px;background:#323437;"></div>
</div>
<div style="position:absolute;left:0;top:0;width:2882px;height:1638px;border-radius:20px;box-sizing:border-box;border:1px solid #000;box-shadow:inset 0 0 0 2px rgba(255,255,255,0.2);pointer-events:none"></div>
</div>
</body></html>
